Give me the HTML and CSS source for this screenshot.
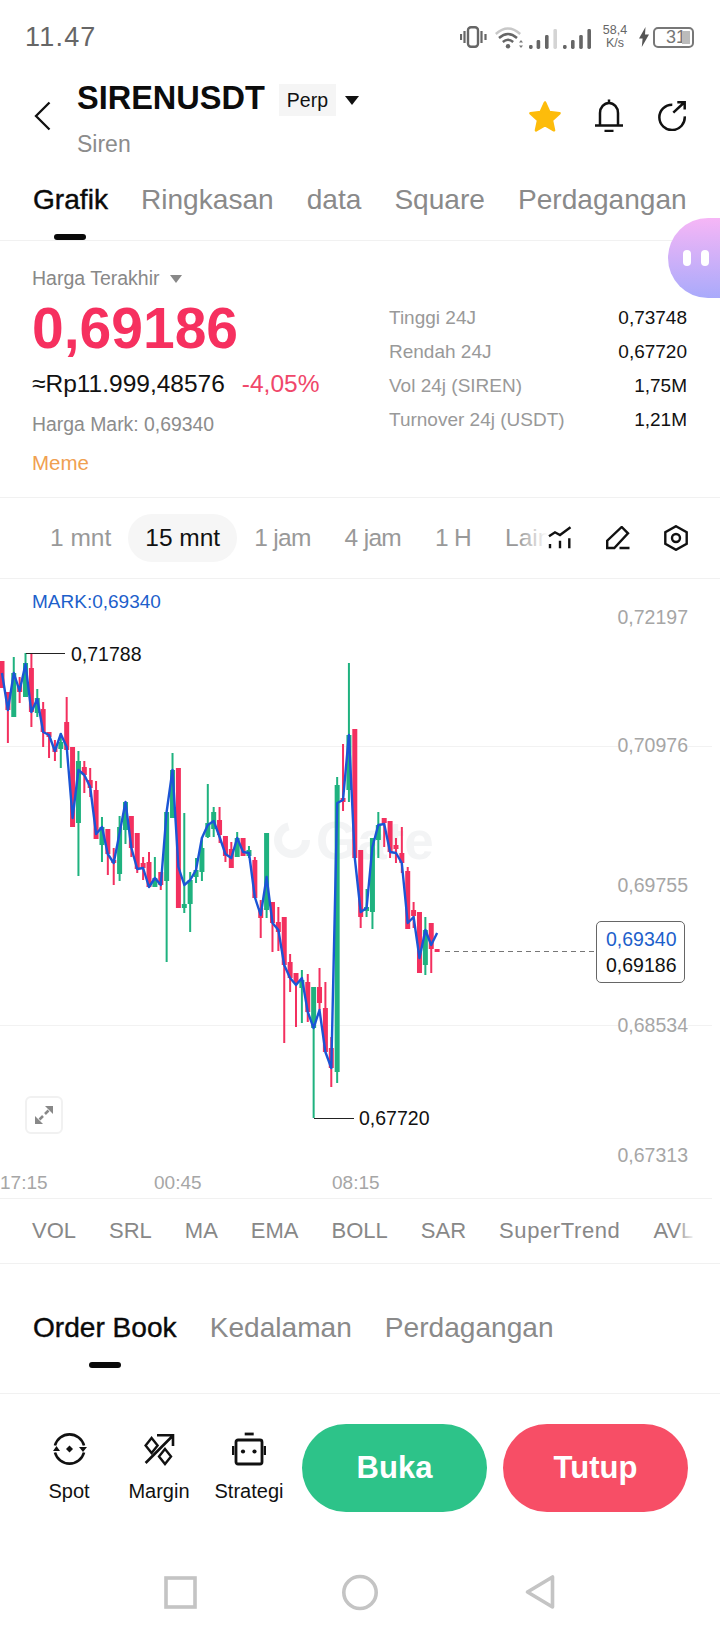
FILE: index.html
```html
<!DOCTYPE html>
<html lang="id">
<head>
    <meta charset="UTF-8">
    <meta name="viewport" content="width=device-width, initial-scale=1.0">
    <title>SIRENUSDT Perp</title>
    <link rel="stylesheet" href="styles.css">
</head>
<body>
    <div class="page">
        <div class="status-bar">
            <span class="clock">11.47</span>
            <div class="status-icons">
                <svg class="ic-vibrate" width="27" height="22" viewBox="0 0 27 22">
                    <rect x="8" y="1.2" width="10" height="19.6" rx="3" fill="none" stroke="#666" stroke-width="2.4"/>
                    <path d="M1 8v6M4.5 5v12M21.5 5v12M25.5 8v6" stroke="#666" stroke-width="2.2" fill="none"/>
                </svg>
                <svg class="ic-wifi" width="28" height="23" viewBox="0 0 28 23">
                    <path d="M.8 8Q13 -3 25.2 8" stroke="#c8c8c8" stroke-width="2.4" fill="none"/>
                    <path d="M4 12Q13 4 22 12M7.8 16Q13 11.6 18.2 16" stroke="#666" stroke-width="2.4" fill="none"/>
                    <circle cx="13" cy="20.3" r="2.2" fill="#666"/>
                    <path d="M26 14l-2 2.6h4zM26 22l-2-2.6h4z" fill="#777"/>
                </svg>
                <svg class="ic-signal" width="62" height="23" viewBox="0 0 62 23">
                    <rect x="0" y="19" width="3.6" height="4" rx="1.4" fill="#666"/>
                    <rect x="7.6" y="14" width="3.6" height="9" rx="1.4" fill="#666"/>
                    <rect x="16" y="9" width="3.6" height="14" rx="1.4" fill="#666"/>
                    <rect x="24.4" y="3" width="3.6" height="20" rx="1.4" fill="#d4d4d4"/>
                    <rect x="34" y="19" width="3.6" height="4" rx="1.4" fill="#666"/>
                    <rect x="42" y="14" width="3.6" height="9" rx="1.4" fill="#666"/>
                    <rect x="50.200" y="9" width="3.6" height="14" rx="1.4" fill="#666"/>
                    <rect x="58.400" y="3" width="3.6" height="20" rx="1.4" fill="#666"/>
                </svg>
                <div class="net-speed"><span>58,4</span><span>K/s</span></div>
                <svg class="ic-bolt" width="10" height="20" viewBox="0 0 10 20">
                    <path d="M6.5 0L0 11.5h3.6L2.8 20 10 7.6H6z" fill="#555"/>
                </svg>
                <div class="battery"><span>31</span><i class="battery-fill"></i></div>
            </div>
        </div>

        <header class="pair-head">
            <svg class="back" width="17" height="30" viewBox="0 0 17 30">
                <path d="M15.5 1.5L2 15l13.5 13.5" fill="none" stroke="#111" stroke-width="2.3"/>
            </svg>
            <div class="pair-info">
                <div class="pair-title">
                    <h1>SIRENUSDT</h1>
                    <span class="chip">Perp</span>
                    <i class="caret caret-dark"></i>
                </div>
                <div class="pair-sub">Siren</div>
            </div>
            <div class="head-actions">
                <svg width="34" height="32" viewBox="0 0 34 32">
                    <path d="M17 2.5l4.3 9.6 10.2 1.1-7.6 7 2.1 10.1-9-5.2-9 5.2 2.1-10.1-7.6-7 10.2-1.1z" fill="#fdbc0b" stroke="#fdbc0b" stroke-width="2.6" stroke-linejoin="round"/>
                </svg>
                <svg width="28" height="33" viewBox="0 0 28 33">
                    <path d="M5 26.5V14a9 10 0 0 1 18 0v12.5M14 .5V4M0 26.5h28M9.500 32h9" fill="none" stroke="#111" stroke-width="2.5"/>
                </svg>
                <svg width="31" height="30" viewBox="0 0 31 30">
                    <path d="M16.300 3.700A12.700 12.700 0 1 0 28.700 15.300M17.300 11.700L28.700 1M21.300 1.200h7.400v7.300" fill="none" stroke="#111" stroke-width="2.500"/>
                </svg>
            </div>
        </header>

        <nav class="tabs main-tabs">
            <span class="tab active">Grafik</span>
            <span class="tab">Ringkasan</span>
            <span class="tab">data</span>
            <span class="tab">Square</span>
            <span class="tab">Perdagangan</span>
        </nav>

        <section class="price-panel">
            <div class="price-left">
                <div class="price-type">Harga Terakhir <i class="caret caret-gray"></i></div>
                <div class="last-price">0,69186</div>
                <div class="price-conv"><span>≈Rp11.999,48576</span><span class="change">-4,05%</span></div>
                <div class="mark-price">Harga Mark: 0,69340</div>
                <div class="tag">Meme</div>
            </div>
            <div class="stats">
                <div class="stat"><span>Tinggi 24J</span><b>0,73748</b></div>
                <div class="stat"><span>Rendah 24J</span><b>0,67720</b></div>
                <div class="stat"><span>Vol 24j (SIREN)</span><b>1,75M</b></div>
                <div class="stat"><span>Turnover 24j (USDT)</span><b>1,21M</b></div>
            </div>
        </section>

        <div class="timeframes">
            <div class="tf-list">
                <span class="tf">1 mnt</span>
                <span class="tf active">15 mnt</span>
                <span class="tf tight">1 jam</span>
                <span class="tf tight">4 jam</span>
                <span class="tf tight">1 H</span>
                <span class="tf">Lain</span>
            </div>
            <div class="tf-tools">
                <svg width="24" height="24" viewBox="0 0 24 24">
                    <path d="M1 10.300L7 6.300l5 2.700L22.500 1.300M2 18v4.300M12 14.700v7.600M21.300 12.300v10" fill="none" stroke="#111" stroke-width="2.400"/>
                </svg>
                <svg width="24" height="24" viewBox="0 0 24 24">
                    <path d="M1.200 22V14.700L15.700 1 22 7.300 8.300 22zM13.500 22H23.500" fill="none" stroke="#111" stroke-width="2.400"/>
                </svg>
                <svg width="24" height="26" viewBox="0 0 24 26">
                    <path d="M12 1.200l10.700 6v11.600L12 24.800 1.300 18.800V7.200z" fill="none" stroke="#111" stroke-width="2.400"/>
                    <circle cx="12" cy="13" r="4" fill="none" stroke="#111" stroke-width="2.400"/>
                </svg>
            </div>
        </div>

        <section class="chart">
            <svg id="candles" class="candles" width="712" height="619" viewBox="0 579 712 619"></svg>
            <div class="mark-label">MARK:0,69340</div>
            <span class="axis-y y-1">0,72197</span>
            <span class="axis-y y-2">0,70976</span>
            <span class="axis-y y-3">0,69755</span>
            <span class="axis-y y-4">0,68534</span>
            <span class="axis-y y-5">0,67313</span>
            <span class="extreme high">0,71788</span>
            <span class="extreme low">0,67720</span>
            <div class="price-tag"><span class="tag-mark">0,69340</span><span>0,69186</span></div>
            <button class="expand">
                <svg width="18" height="18" viewBox="0 0 18 18">
                    <path d="M10 0h8v8zM0 10v8h8z" fill="#888"/>
                    <path d="M13.500 4.500L10 8M4.500 13.500L8 10" stroke="#888" stroke-width="2.600"/>
                </svg>
            </button>
            <span class="axis-x x-1">17:15</span>
            <span class="axis-x x-2">00:45</span>
            <span class="axis-x x-3">08:15</span>
        </section>

        <div class="indicators">
            <span>VOL</span>
            <span>SRL</span>
            <span>MA</span>
            <span>EMA</span>
            <span>BOLL</span>
            <span>SAR</span>
            <span class="wide">SuperTrend</span>
            <span>AVL</span>
        </div>

        <nav class="tabs book-tabs">
            <span class="tab active">Order Book</span>
            <span class="tab">Kedalaman</span>
            <span class="tab">Perdagangan</span>
        </nav>

        <div class="action-bar">
            <div class="shortcut">
                <svg width="35" height="36" viewBox="0 0 35 36">
                    <path d="M3 14.500A15 15 0 0 1 32 14.500M32 21.500A15 15 0 0 1 3 21.500" fill="none" stroke="#111" stroke-width="2.600"/>
                    <path d="M1 20l3.500-5 3.500 5zM27 16l4 5 4-5z" fill="#111"/>
                    <path d="M17.500 14.500l3.500 3.500-3.500 3.500-3.500-3.500z" fill="#111"/>
                </svg>
                <span>Spot</span>
            </div>
            <div class="shortcut">
                <svg width="31" height="36" viewBox="0 0 31 36">
                    <path d="M1.600 32L29 4.500M13 4.200h16V15" fill="none" stroke="#111" stroke-width="2.600"/>
                    <path d="M7.600 7l6 7.500-6 7.500-6-7.500zM21 18l6 7.500-6 7.500-6-7.500z" fill="none" stroke="#111" stroke-width="2.400"/>
                </svg>
                <span>Margin</span>
            </div>
            <div class="shortcut">
                <svg width="34" height="36" viewBox="0 0 34 36">
                    <path d="M12.700 3h9" stroke="#111" stroke-width="2.800"/>
                    <rect x="4" y="9" width="26" height="24" rx="2" fill="none" stroke="#111" stroke-width="2.800"/>
                    <path d="M1 15v9M33 15v9" stroke="#111" stroke-width="2.600"/>
                    <circle cx="11" cy="20.500" r="2.100" fill="#111"/>
                    <circle cx="22.500" cy="20.500" r="2.100" fill="#111"/>
                </svg>
                <span>Strategi</span>
            </div>
            <button class="trade-btn buy">Buka</button>
            <button class="trade-btn sell">Tutup</button>
        </div>

        <div class="nav-bar">
            <svg width="36" height="36" viewBox="0 0 36 36"><rect x="4" y="4" width="29" height="29" fill="none" stroke="#c4c4c4" stroke-width="3.600"/></svg>
            <svg width="38" height="37" viewBox="0 0 38 37"><ellipse cx="19" cy="18.500" rx="16.200" ry="16" fill="none" stroke="#c4c4c4" stroke-width="3.600"/></svg>
            <svg width="32" height="36" viewBox="0 0 32 36"><path d="M28.500 3v30L3.500 18z" fill="none" stroke="#c4c4c4" stroke-width="3.600" stroke-linejoin="round"/></svg>
        </div>

        <div class="assistant"><i></i><i></i></div>
    </div>

    <script src="chart.js"></script>
</body>
</html>
```

FILE: styles.css
```css
* {
    box-sizing: border-box;
}
body {
    margin: 0;
    background: #fff;
    font-family: "Liberation Sans", Arial, sans-serif;
}
.page {
    position: relative;
    width: 720px;
    height: 1640px;
    overflow: hidden;
    background: #fff;
    color: #111;
}

/* status bar */
.status-bar {
    display: flex;
    justify-content: space-between;
    align-items: center;
    height: 74px;
    padding: 0 26px 0 25px;
}
.clock {
    font-size: 27px;
    letter-spacing: 1.2px;
    color: #666;
}
.status-icons {
    display: flex;
    align-items: center;
}
.ic-wifi {
    margin-left: 8px;
}
.ic-signal {
    margin-left: 6px;
}
.net-speed {
    display: flex;
    flex-direction: column;
    align-items: center;
    width: 24px;
    margin-left: 12px;
    font-size: 12.5px;
    line-height: 13px;
    color: #666;
}
.ic-bolt {
    margin-left: 12px;
}
.battery {
    position: relative;
    width: 41px;
    height: 21px;
    margin-left: 4px;
    padding-left: 11px;
    border: 2px solid #777;
    border-radius: 5px;
    font-size: 18px;
    line-height: 17px;
    color: #777;
}
.battery-fill {
    position: absolute;
    top: 2px;
    right: 2px;
    bottom: 2px;
    width: 8px;
    background: #bbb;
}

/* pair header */
.pair-head {
    display: flex;
    align-items: flex-start;
    height: 92px;
    padding-left: 34px;
}
.back {
    margin-top: 27px;
}
.pair-info {
    margin-left: 26px;
}
.pair-title {
    display: flex;
    align-items: center;
    height: 48px;
}
.pair-title h1 {
    margin: 0;
    font-size: 32.500px;
    font-weight: 700;
    color: #0c0c0c;
}
.chip {
    margin-left: 14px;
    margin-top: 4px;
    padding: 0 8px;
    height: 32px;
    line-height: 32px;
    background: #f5f5f5;
    font-size: 19.500px;
}
.caret {
    display: inline-block;
    width: 0;
    height: 0;
    border-left-style: solid;
    border-right-style: solid;
    border-top-style: solid;
    border-left-color: transparent;
    border-right-color: transparent;
}
.caret-dark {
    margin-left: 9px;
    margin-top: 4px;
    border-width: 9px 7px 0;
    border-top-color: #111;
}
.caret-gray {
    margin-left: 5px;
    border-width: 8px 6px 0;
    border-top-color: #888;
    vertical-align: 2px;
}
.pair-sub {
    margin-top: 9px;
    font-size: 23px;
    line-height: 26px;
    color: #8c8c8c;
}
.head-actions {
    display: flex;
    align-items: center;
    gap: 33px;
    margin-left: auto;
    margin-top: 25px;
    padding-right: 33px;
}

/* underlined tab rows */
.tabs {
    display: flex;
    gap: 33px;
    padding-left: 33px;
    border-bottom: 1px solid #f1f1f1;
}
.tab {
    position: relative;
    font-size: 28.100px;
    line-height: 34px;
    color: #8a8a8a;
}
.tab.active {
    color: #0a0a0a;
    -webkit-text-stroke: 0.4px #0a0a0a;
}
.tab.active::after {
    content: "";
    position: absolute;
    left: 50%;
    top: 51px;
    width: 32px;
    height: 6px;
    margin-left: -16px;
    border-radius: 3px;
    background: #0a0a0a;
}
.main-tabs {
    height: 75px;
    padding-top: 17px;
}
.book-tabs {
    height: 130px;
    padding-top: 47px;
}

/* last price block */
.price-panel {
    display: flex;
    height: 257px;
    padding: 24px 33px 0 32px;
    border-bottom: 1px solid #f1f1f1;
}
.price-left {
    width: 357px;
}
.price-type {
    font-size: 19.500px;
    line-height: 26px;
    color: #888;
}
.last-price {
    margin-top: 5px;
    font-size: 57px;
    line-height: 64px;
    font-weight: 700;
    color: #f6305f;
}
.price-conv {
    display: flex;
    gap: 17px;
    margin-top: 9px;
    font-size: 24.500px;
    line-height: 30px;
    color: #111;
}
.change {
    color: #f0476a;
}
.mark-price {
    margin-top: 13px;
    font-size: 19.400px;
    line-height: 24px;
    color: #8c8c8c;
}
.tag {
    margin-top: 15px;
    font-size: 20.500px;
    line-height: 24px;
    color: #f0a050;
}
.stats {
    flex: 1;
    margin-top: 36px;
}
.stat {
    display: flex;
    justify-content: space-between;
    height: 34px;
    font-size: 19px;
    line-height: 34px;
    color: #999;
}
.stat b {
    font-weight: 400;
    color: #111;
}

/* timeframe row */
.timeframes {
    display: flex;
    align-items: center;
    height: 81px;
    padding-left: 33px;
    border-bottom: 1px solid #f1f1f1;
}
.tf-list {
    position: relative;
    display: flex;
    flex: 1;
    align-items: center;
    height: 48px;
    overflow: hidden;
    white-space: nowrap;
}
.tf-list::after {
    content: "";
    position: absolute;
    top: 0;
    right: 0;
    bottom: 0;
    width: 30px;
    background: linear-gradient(90deg, rgba(255,255,255,0), #fff 100%);
}
.tf {
    flex: none;
    height: 48px;
    padding: 0 17px;
    font-size: 24.500px;
    line-height: 48px;
    color: #999;
}
.tf.tight {
    letter-spacing: -0.7px;
}
.tf.active {
    border-radius: 24px;
    background: #f6f6f6;
    color: #111;
}
.tf-tools {
    display: flex;
    align-items: center;
    gap: 34px;
    padding-right: 32px;
}

/* chart canvas */
.chart {
    position: relative;
    width: 712px;
    height: 620px;
    border-bottom: 1px solid #f1f1f1;
}
.candles {
    position: absolute;
    top: 0;
    left: 0;
}
.mark-label {
    position: absolute;
    left: 32px;
    top: 11px;
    font-size: 19px;
    line-height: 24px;
    color: #1d5fcb;
}
.axis-y {
    position: absolute;
    right: 24px;
    font-size: 19.500px;
    line-height: 24px;
    color: #a6a6a6;
    background: #fff;
}
.y-1 { top: 26px; }
.y-2 { top: 154px; }
.y-3 { top: 294px; }
.y-4 { top: 434px; }
.y-5 { top: 564px; }
.extreme {
    position: absolute;
    font-size: 19.500px;
    line-height: 24px;
    color: #111;
}
.high {
    left: 71px;
    top: 63px;
}
.low {
    left: 359px;
    top: 527px;
}
.price-tag {
    position: absolute;
    left: 596px;
    top: 342px;
    display: flex;
    flex-direction: column;
    justify-content: center;
    width: 89px;
    height: 62px;
    padding-left: 9px;
    border: 1.500px solid #666;
    border-radius: 5px;
    background: #fff;
    font-size: 19.500px;
    line-height: 26px;
}
.tag-mark {
    color: #1d5fcb;
}
.expand {
    position: absolute;
    left: 25px;
    top: 517px;
    display: flex;
    align-items: center;
    justify-content: center;
    width: 38px;
    height: 38px;
    padding: 0;
    border: 2px solid #f1f1f1;
    border-radius: 6px;
    background: #fff;
}
.axis-x {
    position: absolute;
    top: 592px;
    font-size: 19px;
    line-height: 24px;
    color: #a6a6a6;
}
.x-1 { left: 0; }
.x-2 { left: 154px; }
.x-3 { left: 332px; }

/* indicator shortcuts */
.indicators {
    position: relative;
    display: flex;
    gap: 33px;
    align-items: center;
    height: 65px;
    padding-left: 32px;
    overflow: hidden;
    white-space: nowrap;
    border-bottom: 1px solid #f1f1f1;
    font-size: 22px;
    color: #888;
}
.indicators .wide {
    letter-spacing: 0.6px;
}
.indicators::after {
    content: "";
    position: absolute;
    top: 0;
    bottom: 0;
    left: 676px;
    width: 44px;
    background: linear-gradient(90deg, rgba(255,255,255,0), #fff 45%);
}

/* bottom actions */
.action-bar {
    display: flex;
    align-items: flex-start;
    height: 118px;
    padding: 30px 0 0 24px;
}
.shortcut {
    display: flex;
    flex-direction: column;
    align-items: center;
    width: 90px;
    padding-top: 7px;
    font-size: 20px;
    line-height: 24px;
    color: #111;
}
.shortcut span {
    margin-top: 12px;
}
.trade-btn {
    width: 185px;
    height: 88px;
    padding: 0;
    border: none;
    border-radius: 44px;
    color: #fff;
    font-family: inherit;
    font-size: 31px;
    font-weight: 700;
}
.buy {
    margin-left: 8px;
    background: #2dc389;
}
.sell {
    margin-left: 16px;
    background: #f74e66;
}
.nav-bar {
    display: grid;
    grid-template-columns: repeat(3, 180px);
    justify-items: center;
    align-items: center;
    height: 52px;
    margin-top: 54px;
    padding-left: 90px;
}

/* floating helper */
.assistant {
    position: absolute;
    top: 218px;
    left: 668px;
    display: flex;
    gap: 10px;
    align-items: center;
    width: 90px;
    height: 80px;
    padding-left: 15px;
    border-radius: 40px;
    background: linear-gradient(180deg, #f6b6f6 0%, #a9aafb 100%);
}
.assistant i {
    width: 8px;
    height: 16px;
    border-radius: 4px;
    background: #fff;
}
```

FILE: chart.js
```js
// 15 min candles: [kind, wickTop, wickBottom, bodyTop, bodyBottom, markLine]
// all numbers are canvas y positions, kind is g (up) or r (down)
const CANDLES = [
    ['r', 661, 688, 661, 688, 673], ['r', 692, 743, 692, 710, 710], ['g', 657, 717, 673, 717, 673],
    ['r', 677, 703, 685, 692, 691], ['g', 653, 697, 663, 697, 664], ['r', 653, 727, 668, 712, 712],
    ['g', 689, 717, 698, 713, 699], ['r', 702, 747, 709, 732, 732], ['r', 732, 758, 732, 737, 735],
    ['r', 740, 761, 747, 752, 751], ['g', 733, 768, 742, 749, 734], ['r', 697, 750, 722, 750, 747],
    ['r', 747, 827, 747, 827, 818], ['g', 751, 876, 761, 823, 770], ['r', 761, 793, 767, 775, 775],
    ['r', 768, 797, 780, 788, 787], ['r', 781, 839, 790, 839, 834], ['g', 817, 862, 827, 845, 827],
    ['r', 829, 875, 829, 854, 854], ['r', 848, 885, 860, 863, 863], ['g', 816, 881, 827, 874, 833],
    ['g', 802, 844, 802, 830, 802], ['r', 816, 857, 816, 848, 848], ['r', 833, 873, 833, 869, 869],
    ['r', 857, 880, 863, 868, 868], ['r', 852, 887, 862, 887, 887], ['g', 857, 887, 878, 887, 878],
    ['r', 872, 890, 872, 885, 885], ['g', 812, 962, 812, 881, 812], ['g', 753, 818, 770, 818, 770],
    ['r', 768, 908, 768, 908, 867], ['g', 813, 913, 904, 908, 885], ['g', 872, 932, 880, 904, 880],
    ['g', 858, 883, 870, 877, 870], ['g', 837, 881, 848, 872, 838], ['g', 784, 838, 823, 837, 825],
    ['g', 807, 837, 812, 829, 821], ['r', 807, 843, 820, 835, 837], ['r', 836, 862, 836, 856, 854],
    ['r', 842, 868, 849, 868, 858], ['g', 832, 857, 838, 857, 838], ['r', 838, 856, 838, 856, 852],
    ['g', 846, 858, 850, 856, 853], ['r', 857, 898, 860, 898, 897], ['r', 900, 938, 908, 918, 915],
    ['g', 833, 918, 833, 910, 877], ['r', 902, 952, 902, 923, 923], ['r', 907, 951, 922, 932, 930],
    ['r', 917, 1043, 917, 965, 965], ['r', 954, 992, 962, 978, 978], ['r', 973, 1027, 973, 983, 985],
    ['g', 970, 1023, 980, 988, 978], ['r', 974, 1022, 982, 1012, 1012], ['g', 987, 1118, 987, 1028, 1028],
    ['r', 968, 1010, 987, 1003, 1010], ['r', 982, 1052, 1008, 1052, 1052], ['r', 1037, 1087, 1048, 1068, 1068],
    ['g', 777, 1083, 785, 1072, 803], ['r', 744, 811, 798, 802, 800], ['g', 663, 802, 735, 790, 735],
    ['r', 729, 858, 729, 858, 858], ['r', 850, 928, 850, 917, 912], ['g', 889, 917, 907, 911, 908],
    ['g', 838, 929, 838, 912, 847], ['g', 812, 858, 825, 840, 825], ['r', 818, 847, 818, 823, 824],
    ['r', 821, 858, 821, 852, 852], ['r', 838, 863, 845, 849, 853], ['r', 827, 873, 853, 863, 863],
    ['r', 867, 929, 871, 929, 923], ['r', 902, 928, 910, 916, 917], ['r', 912, 973, 912, 973, 958],
    ['g', 917, 975, 930, 965, 930], ['r', 923, 973, 923, 949, 945], ['r', 949, 952, 949, 952, 933]
];

const COLORS = { g: '#1fb27f', r: '#f3305f' };
const STEP = 5.88;
const svg = document.getElementById('candles');

function add(tag, attrs) {
    const el = document.createElementNS('http://www.w3.org/2000/svg', tag);
    Object.keys(attrs).forEach(k => el.setAttribute(k, attrs[k]));
    svg.appendChild(el);
    return el;
}

function hLine(x1, x2, y, stroke, extra) {
    add('line', Object.assign({ x1, x2, y1: y, y2: y, stroke, 'stroke-width': 1 }, extra));
}

// grid
hLine(0, 712, 746.5, '#f2f2f2');
hLine(0, 712, 1025.5, '#f2f2f2');

// watermark
add('circle', { cx: 292, cy: 840, r: 14, fill: 'none', stroke: '#f3f4f5', 'stroke-width': 8, 'stroke-dasharray': '62 26' });
const mark = add('text', { x: 316, y: 859, fill: '#f3f4f5', 'font-size': 53, 'font-weight': 700, 'font-family': 'Liberation Sans, sans-serif' });
mark.textContent = 'Gate';

// candles
const line = [];
CANDLES.forEach((c, i) => {
    const x = 2 + i * STEP;
    const color = COLORS[c[0]];
    add('rect', { x: x - 1, y: c[1], width: 2, height: c[2] - c[1], fill: color });
    add('rect', { x: x - 2.5, y: c[3], width: 5, height: c[4] - c[3], fill: color });
    line.push(x.toFixed(1) + ',' + c[5]);
});

add('polyline', { points: line.join(' '), fill: 'none', stroke: '#1b55d6', 'stroke-width': 2.4, 'stroke-linejoin': 'round' });

// high, low and last price leaders
hLine(26, 65, 653.5, '#222');
hLine(314, 354, 1118.5, '#222');
hLine(445, 596, 951.5, '#777', { 'stroke-dasharray': '5 4' });
```
